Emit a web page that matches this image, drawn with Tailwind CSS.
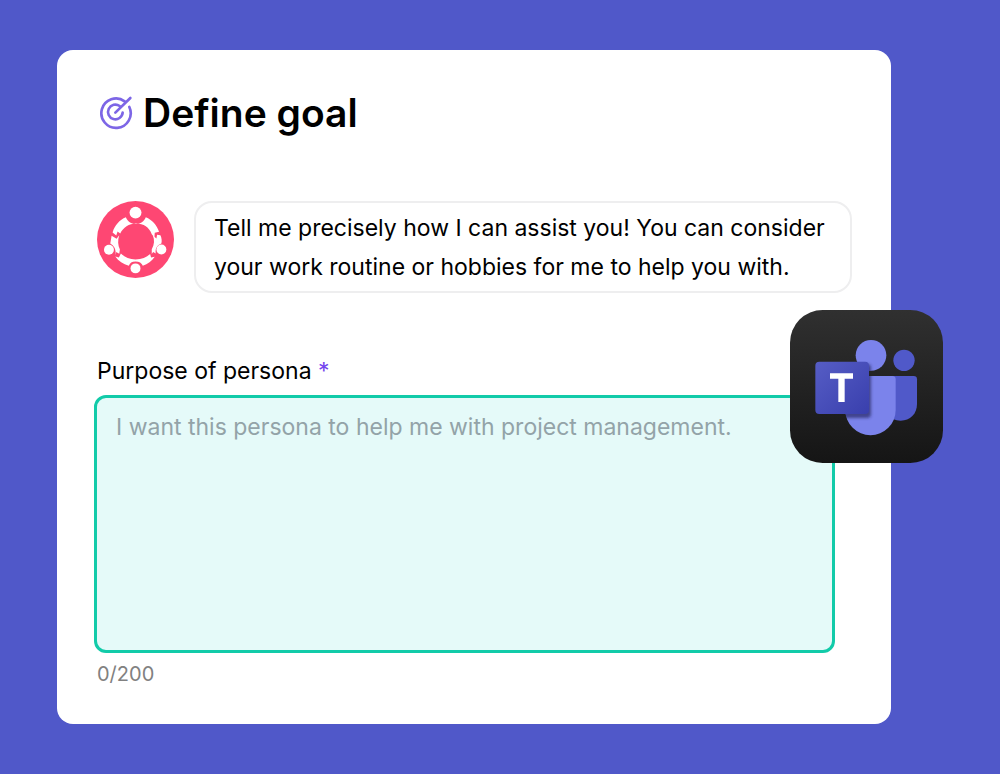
<!DOCTYPE html>
<html lang="en">
<head>
<meta charset="utf-8">
<meta name="viewport" content="width=device-width, initial-scale=1">
<title>Define goal</title>
<script src="https://cdn.jsdelivr.net/npm/@tailwindcss/browser@4"></script>
</head>
<body class="min-h-screen bg-[#5058c9] font-['Inter',sans-serif] text-black">
<main class="pt-[50px] pb-[50px] pl-[57px] pr-[109px]">
  <section class="relative rounded-2xl bg-white pt-9 pb-9 pl-10 pr-10">
    <h1 class="flex items-center gap-2.5 text-[39px] leading-[53px] font-semibold">
      <svg class="ml-0.5 size-[34px] shrink-0" viewBox="0 0 102 102" fill="none" stroke="#7d66e6" stroke-width="8" stroke-linecap="round" stroke-linejoin="round" aria-hidden="true">
        <path d="M77 16A44 44 0 1 0 91 33"/>
        <path d="M62 30A22 22 0 1 0 71 50"/>
        <path d="M49 50 94 6"/>
      </svg>
      Define goal
    </h1>

    <div class="mt-[62px] flex items-start gap-5">
      <svg class="size-[77px] shrink-0" viewBox="21 14 232 232" role="img" aria-label="Assistant">
        <circle cx="137" cy="130" r="116" fill="#fe4773"/>
        <path fill="#fff" d="M108 63C113 76 124 83 138 83S163 76 168 63C187 71 202 87 208 107L195 110 194 123 186 114C179 94 161 82 139 82S100 94 91 112L83 106 79 118 68 109C74 87 89 71 108 63Z"/>
        <path fill="#fff" d="M65 119 80 128 88 117C83 131 84 148 90 160L88 173 79 168 77 178C79 160 73 149 61 142Z"/>
        <path fill="#fff" d="M212 117C216 125 217 134 215 142 202 147 196 157 198 172L190 168 186 174 186 159C194 145 195 131 189 117L200 127 202 116Z"/>
        <path fill="#fff" d="M76 181 87 184 93 172C104 184 119 190 137 190 156 190 170 184 181 174L184 184 195 182C186 195 174 204 159 209 156 200 148 196 137 196S120 200 117 209C100 204 86 195 76 181Z"/>
        <g fill="#fff">
          <circle cx="137" cy="49" r="18"/><circle cx="57" cy="161" r="15"/><circle cx="215" cy="160" r="15"/><circle cx="137" cy="217" r="15"/>
        </g>
      </svg>
      <p class="-mr-px flex-1 rounded-[18px] border-2 border-[#eeeeef] px-[18px] pt-1.5 pb-1 text-[23px] leading-[39px]">Tell me precisely how I can assist you! You can consider your work routine or hobbies for me to help you with.</p>
    </div>

    <label for="purpose" class="mt-[62px] block text-[23px] leading-8">Purpose of persona <span class="text-[#7445ee]">*</span></label>
    <div class="-ml-[3px] mt-2 mr-4">
      <textarea id="purpose" maxlength="200" required aria-describedby="count" placeholder="I want this persona to help me with project management." class="block h-[258px] w-full resize-none rounded-xl border-3 border-[#12cba9] bg-[#e5faf9] px-[19px] py-[13px] text-[23px] leading-8 outline-none placeholder:text-[#93a3a8]"></textarea>
    </div>
    <p id="count" class="mt-[7px] text-[20px] leading-7 text-[#818181]">0/200</p>

    <svg class="absolute top-[260px] -right-[52px] size-[153px]" viewBox="30 30 459 459" role="img" aria-label="Microsoft Teams">
      <defs>
        <linearGradient id="tile" x1="0" y1="0" x2="0" y2="1"><stop offset="0" stop-color="#303030"/><stop offset="1" stop-color="#151515"/></linearGradient>
        <linearGradient id="badge" x1="0" y1="0" x2="1" y2="1"><stop offset="0" stop-color="#565dc5"/><stop offset="1" stop-color="#393fad"/></linearGradient>
        <clipPath id="person"><circle cx="273" cy="166" r="46"/><path d="M196 228H337Q347 228 347 238V330A75.500 75.500 0 0 1 196 330Z"/></clipPath>
        <filter id="soft" x="-20%" y="-20%" width="150%" height="150%"><feGaussianBlur stdDeviation="5"/></filter>
      </defs>
      <rect x="30" y="30" width="459" height="459" rx="98" fill="url(#tile)"/>
      <circle cx="372" cy="181" r="32" fill="#5059c9"/>
      <path d="M330 228H401Q411 228 411 238V312C411 342 390 362 362 362Q350 362 338 357Z" fill="#5059c9"/>
      <circle cx="273" cy="166" r="46" fill="#7b83eb"/>
      <path d="M196 228H337Q347 228 347 238V330A75.500 75.500 0 0 1 196 330Z" fill="#7b83eb"/>
      <g clip-path="url(#person)"><rect x="112" y="192" width="161" height="162" rx="12" fill="#20235c" opacity=".65" filter="url(#soft)"/></g>
      <rect x="106" y="185" width="161" height="157" rx="12" fill="url(#badge)"/>
      <path d="M150 220H219V236H194V306H175V236H150Z" fill="#fff"/>
    </svg>
  </section>
</main>
</body>
</html>
